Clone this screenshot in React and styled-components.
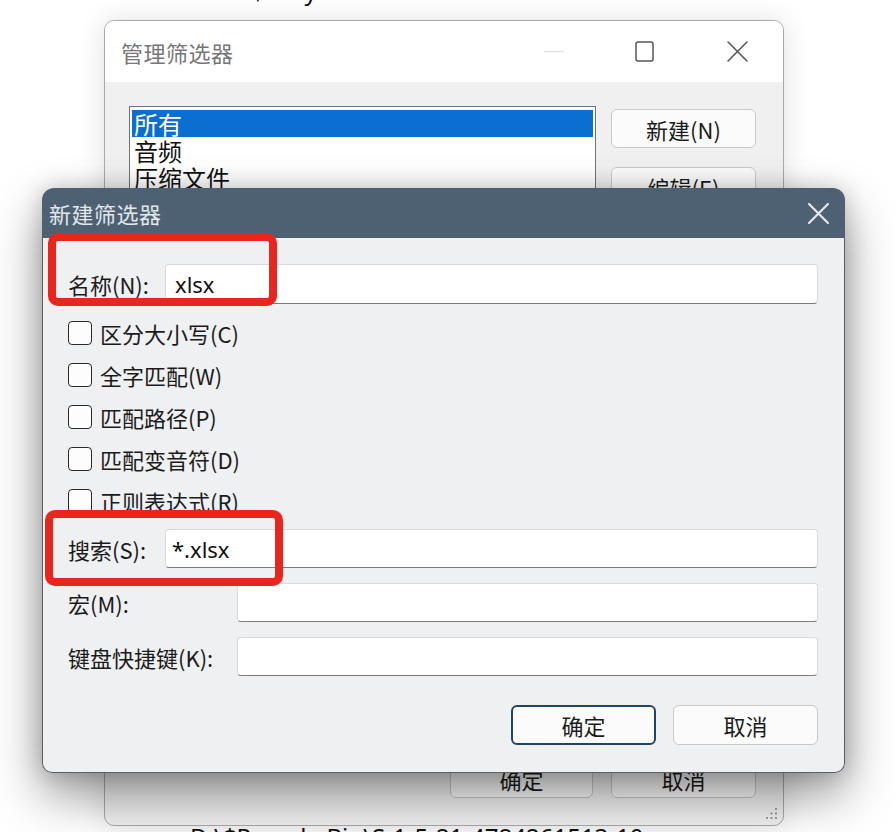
import styled, { createGlobalStyle } from "styled-components";

const GlobalStyle = createGlobalStyle`
  html, body {
    margin: 0;
    padding: 0;
    background: #ffffff;
  }
  body {
    font-family: "Noto Sans CJK SC", "Noto Sans", sans-serif;
    color: #1b1b1b;
  }
`

const Desktop = styled.div`
  position: relative;
  width: 896px;
  height: 832px;
  overflow: hidden;
  background: #ffffff;
`

const Doc = styled.div`
  height: 832px;
  display: flex;
  flex-direction: column;
  justify-content: space-between;
  font-family: "Noto Sans", "Noto Sans CJK SC", sans-serif;
  font-size: 24px;
  line-height: 30px;
  color: #111;
`

const DocLine = styled.div`
  padding-left: ${p => p.$left}px;
  margin-top: ${p => p.$top || 0}px;
  margin-bottom: ${p => p.$bottom || 0}px;
  white-space: nowrap;
`

/* ---------- back window ---------- */

const BackWindow = styled.div`
  position: absolute;
  left: 104px;
  top: 20px;
  width: 680px;
  height: 806px;
  box-sizing: border-box;
  border: 1px solid #a9a9a9;
  border-radius: 10px;
  background: #f0f0f0;
  box-shadow: 0 0 28px rgba(0, 0, 0, 0.12);
  display: flex;
  flex-direction: column;
  overflow: hidden;
`

const BackTitleBar = styled.div`
  height: 61px;
  flex: none;
  display: flex;
  align-items: center;
  background: #ffffff;
  padding-left: 16px;
`

const BackTitle = styled.div`
  flex: 1;
  font-size: 22px;
  color: #767676;
  letter-spacing: 0.5px;
`

const WinControl = styled.div`
  width: ${p => p.$w}px;
  height: 60px;
  display: flex;
  align-items: center;
  justify-content: center;
`

const BackBody = styled.div`
  flex: 1;
  display: flex;
  flex-direction: column;
  padding: 24px 27px 27px 24px;
`

const BackTop = styled.div`
  display: flex;
  gap: 15px;
  flex: 1;
`

const ListBox = styled.div`
  width: 469px;
  height: 330px;
  box-sizing: border-box;
  border: 1px solid #6f7378;
  background: #ffffff;
  padding: 3px 2px;
  font-size: 24px;
  line-height: 27px;
`

const ListItem = styled.div`
  padding-left: 2px;
  height: 27px;
  color: ${p => (p.$selected ? "#ffffff" : "#111")};
  background: ${p => (p.$selected ? "#0b6fd2" : "transparent")};
`

const SideButtons = styled.div`
  display: flex;
  flex-direction: column;
  gap: 19px;
  padding-top: 3px;
`

const WinButton = styled.div`
  width: ${p => p.$w || 145}px;
  height: ${p => p.$h || 39}px;
  box-sizing: border-box;
  display: flex;
  align-items: center;
  justify-content: center;
  font-size: 22px;
  color: #1b1b1b;
  background: #fbfbfb;
  border: ${p => (p.$focus ? "2px solid #1f4668" : "1px solid #c9c9c9")};
  border-radius: 6px;
`

const ButtonRow = styled.div`
  display: flex;
  justify-content: flex-end;
  gap: ${p => p.$gap}px;
  margin-top: ${p => p.$top || 0}px;
`

const Grip = styled.svg`
  position: absolute;
  right: 4px;
  bottom: 4px;
`

/* ---------- front dialog ---------- */

const Dialog = styled.div`
  position: absolute;
  left: 42px;
  top: 188px;
  width: 803px;
  height: 585px;
  box-sizing: border-box;
  display: flex;
  flex-direction: column;
  border-radius: 12px 12px 10px 10px;
  box-shadow: 0 22px 50px rgba(0, 0, 0, 0.42), 0 0 22px rgba(0, 0, 0, 0.18);
`

const DialogTitleBar = styled.div`
  height: 50px;
  flex: none;
  display: flex;
  align-items: center;
  background: #4d6172;
  border-radius: 12px 12px 0 0;
  padding-left: 7px;
  padding-right: 16px;
`

const DialogTitle = styled.div`
  flex: 1;
  font-size: 22px;
  color: #e2e7eb;
  letter-spacing: 0.5px;
`

const DialogBody = styled.div`
  flex: 1;
  background: #eff0f1;
  border: 1.5px solid #5a5f64;
  border-top: none;
  border-radius: 0 0 10px 10px;
  padding: 26px 26px 27px 25px;
  display: flex;
  flex-direction: column;
`

const FieldRow = styled.div`
  display: flex;
  align-items: center;
  margin-top: ${p => p.$top || 0}px;
  height: ${p => p.$h}px;
`

const Label = styled.div`
  width: ${p => p.$w}px;
  flex: none;
  font-size: 22px;
  color: #1b1b1b;
`

const TextInput = styled.div`
  flex: 1;
  height: 100%;
  box-sizing: border-box;
  display: flex;
  align-items: center;
  padding-left: ${p => p.$pad || 9}px;
  background: #ffffff;
  border: 1px solid #dadada;
  border-bottom: 1.5px solid #7b7b7b;
  border-radius: 4px;
  font-family: "Noto Sans", "Noto Sans CJK SC", sans-serif;
  font-size: 22px;
  color: #111;
`

const CheckList = styled.div`
  margin-top: 8px;
  display: flex;
  flex-direction: column;
`

const CheckRow = styled.div`
  height: 42px;
  display: flex;
  align-items: center;
  gap: 8px;
  font-size: 22px;
  color: #1b1b1b;
`

const Box = styled.div`
  width: 24px;
  height: 24px;
  box-sizing: border-box;
  border: 1.5px solid #2a2a2a;
  border-radius: 4px;
  background: #fdfdfd;
`

const Highlight = styled.div`
  position: absolute;
  left: ${p => p.$x}px;
  top: ${p => p.$y}px;
  width: ${p => p.$w}px;
  height: ${p => p.$h}px;
  box-sizing: border-box;
  border: 8px solid #e8261d;
  border-radius: 10px;
  z-index: 3;
`

const checks = ["区分大小写(C)", "全字匹配(W)", "匹配路径(P)", "匹配变音符(D)", "正则表达式(R)"]

function CloseIcon({ size, color, width }) {
  return (
    <svg width={size} height={size} viewBox="0 0 20 20">
      <path d="M1 1 L19 19 M19 1 L1 19" stroke={color} strokeWidth={width} strokeLinecap="round" />
    </svg>
  )
}

export default function App() {
  return (
    <Desktop>
      <GlobalStyle />
      <Doc>
        <DocLine $left={218} $top={-24}>D:\$Recycle.Bin\S-1-5-21-4784</DocLine>
        <DocLine $left={190} $bottom={-20}>D:\$Recycle.Bin\S-1-5-21-4784261513-10</DocLine>
      </Doc>

      <BackWindow>
        <BackTitleBar>
          <BackTitle>管理筛选器</BackTitle>
          <WinControl $w={90}>
            <svg width="20" height="2"><rect width="20" height="1.2" fill="#e2e2e2" /></svg>
          </WinControl>
          <WinControl $w={92}>
            <svg width="20" height="22" viewBox="0 0 20 22">
              <rect x="1" y="1" width="17" height="19" rx="2" fill="none" stroke="#555" strokeWidth="1.5" />
            </svg>
          </WinControl>
          <WinControl $w={92}>
            <CloseIcon size={21} color="#555" width={1.5} />
          </WinControl>
        </BackTitleBar>
        <BackBody>
          <BackTop>
            <ListBox>
              <ListItem $selected>所有</ListItem>
              <ListItem>音频</ListItem>
              <ListItem>压缩文件</ListItem>
              <ListItem>文档</ListItem>
              <ListItem>可执行文件</ListItem>
            </ListBox>
            <SideButtons>
              <WinButton>新建(N)</WinButton>
              <WinButton>编辑(E)</WinButton>
              <WinButton>删除(D)</WinButton>
            </SideButtons>
          </BackTop>
          <ButtonRow $gap={18}>
            <WinButton $w={143}>确定</WinButton>
            <WinButton>取消</WinButton>
          </ButtonRow>
        </BackBody>
        <Grip width="14" height="14" viewBox="0 0 14 14">
          {[[11, 2], [11, 6.5], [6.5, 6.5], [11, 11], [6.5, 11], [2, 11]].map(([cx, cy], i) => (
            <circle key={i} cx={cx} cy={cy} r="1.1" fill="#8a8a8a" />
          ))}
        </Grip>
      </BackWindow>

      <Dialog>
        <DialogTitleBar>
          <DialogTitle>新建筛选器</DialogTitle>
          <CloseIcon size={21} color="#e6eaee" width={2} />
        </DialogTitleBar>
        <DialogBody>
          <FieldRow $h={40}>
            <Label $w={97}>名称(N):</Label>
            <TextInput>xlsx</TextInput>
          </FieldRow>
          <CheckList>
            {checks.map(c => (
              <CheckRow key={c}>
                <Box />
                {c}
              </CheckRow>
            ))}
          </CheckList>
          <FieldRow $h={39} $top={7}>
            <Label $w={97}>搜索(S):</Label>
            <TextInput $pad={6}>*.xlsx</TextInput>
          </FieldRow>
          <FieldRow $h={39} $top={15}>
            <Label $w={169}>宏(M):</Label>
            <TextInput />
          </FieldRow>
          <FieldRow $h={39} $top={15}>
            <Label $w={169}>键盘快捷键(K):</Label>
            <TextInput />
          </FieldRow>
          <ButtonRow $gap={17} $top={29}>
            <WinButton $h={40} $focus>确定</WinButton>
            <WinButton $h={40}>取消</WinButton>
          </ButtonRow>
        </DialogBody>
        <Highlight $x={6} $y={45} $w={229} $h={73} />
        <Highlight $x={3} $y={322} $w={238} $h={76} />
      </Dialog>
    </Desktop>
  )
}
